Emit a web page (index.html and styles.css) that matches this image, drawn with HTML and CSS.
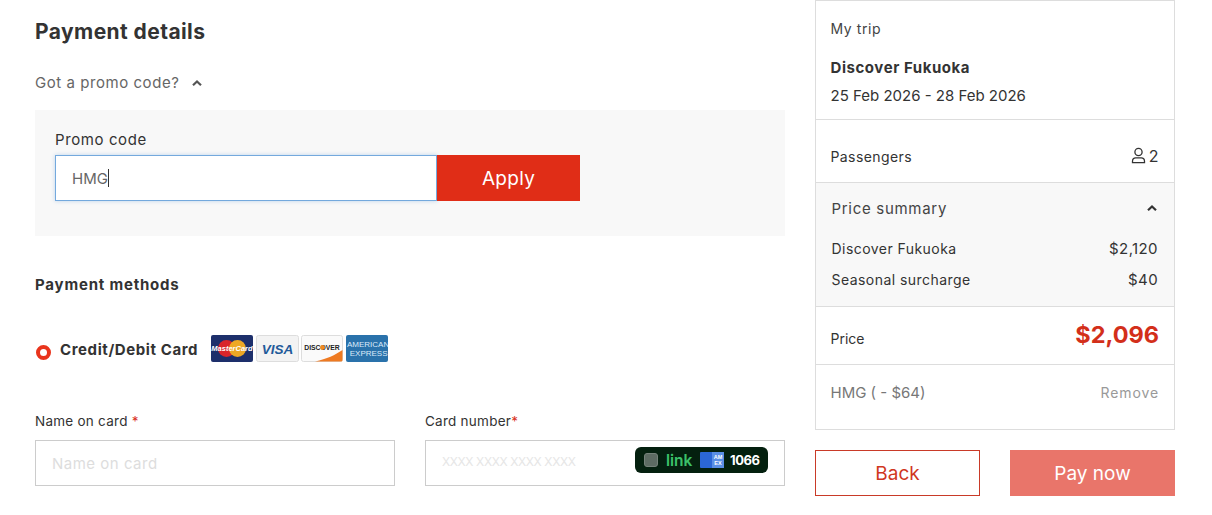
FILE: index.html
```html
<!DOCTYPE html>
<html lang="en">
<head>
<meta charset="utf-8">
<title>Payment details</title>
<link rel="stylesheet" href="styles.css">
</head>
<body>
<div class="page">
  <main class="details">
    <h1 class="title">Payment details</h1>
    <div class="promo-toggle">
      <span>Got a promo code?</span>
      <svg class="chev" width="12" height="8" viewBox="0 0 12 8"><path d="M2 6.200 6 2.400l4 3.800" fill="none" stroke="#555" stroke-width="2.200"/></svg>
    </div>
    <section class="promo-box">
      <label class="promo-label">Promo code</label>
      <div class="promo-row">
        <div class="promo-input"><span>HMG</span><i class="caret"></i></div>
        <button class="apply">Apply</button>
      </div>
    </section>
    <h2 class="methods">Payment methods</h2>
    <div class="method">
      <span class="radio"></span>
      <span class="method-name">Credit/Debit Card</span>
      <div class="cards">
        <svg class="card" width="42" height="27" viewBox="0 0 42 27">
          <rect width="42" height="27" rx="2" fill="#1d2f6b"/>
          <circle cx="15.500" cy="13.500" r="8.500" fill="#d9252b"/>
          <circle cx="26.500" cy="13.500" r="8.500" fill="#eda825"/>
          <text x="21" y="16" class="mc">MasterCard</text>
        </svg>
        <svg class="card" width="43" height="27" viewBox="0 0 43 27">
          <rect x=".5" y=".5" width="42" height="26" rx="2" fill="#f3f3f3" stroke="#ddd"/>
          <text x="21.500" y="18.500" class="visa">VISA</text>
        </svg>
        <svg class="card" width="42" height="27" viewBox="0 0 42 27">
          <rect x=".5" y=".5" width="41" height="26" rx="2" fill="#fafafa" stroke="#ddd"/>
          <path d="M14 26.500C26 24 34 20 41.500 15v10a1.500 1.500 0 0 1-1.500 1.500z" fill="#ee7a22"/>
          <text x="21" y="14.500" class="disc">DISCOVER</text>
          <circle cx="21.500" cy="12.500" r="2.400" fill="#f08a24"/>
        </svg>
        <svg class="card" width="42" height="27" viewBox="0 0 42 27">
          <rect width="42" height="27" rx="2" fill="#2a72ab"/>
          <text x="1" y="11.500" class="amex">AMERICAN</text>
          <text x="41.500" y="21" class="amex amex-end">EXPRESS</text>
        </svg>
      </div>
    </div>
    <div class="fields">
      <div class="field">
        <label class="field-label">Name on card <em>*</em></label>
        <div class="field-box"><span class="ph">Name on card</span></div>
      </div>
      <div class="field">
        <label class="field-label">Card number<em>*</em></label>
        <div class="field-box card-box">
          <span class="ph ph-card">XXXX XXXX XXXX XXXX</span>
          <div class="link-badge">
            <i class="link-check"></i>
            <span class="link-word">link</span>
            <svg class="link-card" width="24" height="16" viewBox="0 0 24 16"><rect width="24" height="16" rx="1" fill="#2b67d6"/><rect x="12" width="12" height="16" fill="#5a8fe6"/><text x="18" y="7" class="mini">AM</text><text x="18" y="13" class="mini">EX</text></svg>
            <span class="link-num">1066</span>
          </div>
        </div>
      </div>
    </div>
  </main>
  <aside class="side">
    <div class="panel">
      <div class="trip">
        <div class="trip-head">My trip</div>
        <div class="trip-name">Discover Fukuoka</div>
        <div class="trip-date">25 Feb 2026 - 28 Feb 2026</div>
      </div>
      <div class="pax">
        <span>Passengers</span>
        <span class="pax-count">
          <svg width="15" height="17" viewBox="0 0 15 17"><circle cx="7.500" cy="5" r="3.600" fill="none" stroke="#333" stroke-width="1.300"/><path d="M1.500 15.600v-1.400c0-2.100 1.500-3.400 3.300-3.400h5.400c1.800 0 3.300 1.300 3.300 3.400v1.400z" fill="none" stroke="#333" stroke-width="1.300"/></svg>
          <b>2</b>
        </span>
      </div>
      <div class="summary">
        <div class="summary-head">
          <span>Price summary</span>
          <svg width="12" height="8" viewBox="0 0 12 8"><path d="M2 6.200 6 2.400l4 3.800" fill="none" stroke="#333" stroke-width="2.200"/></svg>
        </div>
        <div class="summary-row row-one"><span>Discover Fukuoka</span><span class="amount">$2,120</span></div>
        <div class="summary-row row-two"><span>Seasonal surcharge</span><span class="amount">$40</span></div>
      </div>
      <div class="price">
        <span>Price</span>
        <strong>$2,096</strong>
      </div>
      <div class="discount">
        <span>HMG ( - $64)</span>
        <span class="remove">Remove</span>
      </div>
    </div>
    <div class="actions">
      <button class="back">Back</button>
      <button class="pay">Pay now</button>
    </div>
  </aside>
</div>
</body>
</html>
```
FILE: styles.css
```css
* { box-sizing: border-box; }
html, body { margin: 0; padding: 0; background: #fff; }
body {
  font-family: Inter, "Liberation Sans", sans-serif;
  color: #333;
  height: 515px;
  overflow: hidden;
}
.page { display: flex; gap: 30px; padding-left: 35px; align-items: flex-start; }
.details { width: 750px; display: flex; flex-direction: column; }
.title { margin: 19px 0 0; font-size: 21px; line-height: 26px; font-weight: 700; color: #333; letter-spacing: .42px; }
.promo-toggle { display: flex; align-items: center; gap: 12px; margin-top: 25px; height: 25px; font-size: 15px; color: #666; letter-spacing: .55px; }
.promo-box { margin-top: 15px; height: 126px; background: #f8f8f8; padding: 20px; display: flex; flex-direction: column; }
.promo-label { font-size: 15px; line-height: 20px; color: #333; margin-bottom: 5px; letter-spacing: .6px; }
.promo-row { display: flex; height: 46px; width: 525px; }
.promo-input {
  width: 382px; height: 46px; background: #fff; border: 1px solid #74a9dd;
  box-shadow: 0 0 4px rgba(116,169,221,.45);
  padding-left: 16px; display: flex; align-items: center; font-size: 15px; color: #666;
}
.caret { display: block; width: 1px; height: 18px; background: #333; }
.apply {
  width: 143px; border: 0; background: #e02d17; color: #fff;
  font: 400 19px Inter, "Liberation Sans", sans-serif; letter-spacing: .3px;
}
.methods { margin: 39px 0 0; font-size: 15px; line-height: 20px; font-weight: 700; color: #333; letter-spacing: .8px; }
.method { display: flex; align-items: flex-start; margin-top: 40px; height: 35px; }
.radio { width: 15px; height: 15px; margin: 10px 9px 0 1px; border-radius: 50%; border: 4px solid #e9341c; background: #fff; }
.method-name { font-size: 15px; line-height: 20px; font-weight: 700; margin-top: 5px; width: 151px; letter-spacing: .6px; white-space: nowrap; }
.cards { display: flex; gap: 2.500px; }
.card { display: block; }
.mc { font: italic 700 7.500px "Liberation Sans", sans-serif; fill: #fff; text-anchor: middle; }
.visa { font: italic 800 13.500px "Liberation Sans", sans-serif; fill: #1f5a9a; text-anchor: middle; }
.disc { font: 700 6.800px "Liberation Sans", sans-serif; fill: #222; text-anchor: middle; }
.amex { font: 400 8px "Liberation Sans", sans-serif; fill: #dceafa; }
.amex-end { text-anchor: end; }
.mini { font: 700 5.500px "Liberation Sans", sans-serif; fill: #fff; text-anchor: middle; }
.fields { display: grid; grid-template-columns: 360px 360px; gap: 30px; margin-top: 41px; }
.field-label { display: block; font-size: 13.500px; line-height: 20px; color: #333; margin-bottom: 9px; letter-spacing: .25px; }
.field-label em { color: #d9331f; font-style: normal; }
.field-box { height: 46px; border: 1px solid #ccc; background: #fff; display: flex; align-items: center; padding-left: 16px; position: relative; }
.ph { color: #ddd; font-size: 15px; letter-spacing: .5px; }
.ph-card { font-size: 12px; letter-spacing: -.4px; color: #e6e6e6; margin-top: -4px; }
.card-box { justify-content: space-between; padding-right: 16px; }
.link-badge {
  display: flex; align-items: center; width: 133px; height: 26px; margin-top: -6px;
  background: #04200f; border-radius: 6px; padding-left: 9px;
}
.link-check { display: block; width: 14px; height: 14px; border-radius: 3px; background: #5d6b63; border: 1px solid #75827a; }
.link-word { color: #3cc06a; font-size: 15.500px; font-weight: 600; margin-left: 8px; }
.link-card { margin-left: 8px; }
.link-num { color: #fff; font-size: 13px; font-weight: 700; margin-left: 5.500px; letter-spacing: -.4px; }
.side { width: 360px; display: flex; flex-direction: column; }
.panel { height: 430px; border: 1px solid #ddd; display: flex; flex-direction: column; font-size: 14px; }
.trip { height: 119px; padding: 18px 14.500px 0; border-bottom: 1px solid #ddd; }
.trip-head { line-height: 20px; color: #444; letter-spacing: .6px; }
.trip-name { margin-top: 19px; line-height: 20px; font-size: 15px; font-weight: 700; letter-spacing: .56px; }
.trip-date { margin-top: 7.500px; line-height: 20px; font-size: 15px; }
.pax { height: 63px; border-bottom: 1px solid #ddd; padding: 11px 15px 0 14.500px; display: flex; justify-content: space-between; align-items: center; letter-spacing: .4px; }
.pax-count { display: flex; align-items: center; gap: 3px; margin-top: -2px; }
.pax-count b { font-weight: 400; font-size: 16px; }
.summary { height: 124px; background: #f8f8f8; border-bottom: 1px solid #ddd; padding: 0 16px 0 15.500px; }
.summary-head { display: flex; justify-content: space-between; align-items: center; height: 50px; font-size: 15px; color: #444; letter-spacing: .7px; }
.summary-row { display: flex; justify-content: space-between; line-height: 20px; letter-spacing: .45px; }
.row-one { margin-top: 6px; }
.row-two { margin-top: 11px; }
.amount { font-size: 15px; letter-spacing: .4px; }
.price { height: 58px; border-bottom: 1px solid #ddd; padding: 0 15px 0 14.500px; display: flex; justify-content: space-between; align-items: center; }
.price span { margin-top: 6px; }
.price strong { font-size: 23.500px; font-weight: 700; color: #d32f1a; margin-top: -2px; }
.discount { flex: 1; padding: 18px 15px 0 14.500px; display: flex; justify-content: space-between; align-items: flex-start; line-height: 20px; font-size: 15px; color: #777; }
.remove { font-size: 14px; color: #999; letter-spacing: .9px; }
.actions { display: flex; justify-content: space-between; margin-top: 20px; }
.actions button { width: 165px; height: 46px; font: 400 19px Inter, "Liberation Sans", sans-serif; }
.back { background: #fff; border: 1px solid #c93a28; color: #d0371f; }
.pay { background: #e9756a; border: 0; color: #fff; }
```
